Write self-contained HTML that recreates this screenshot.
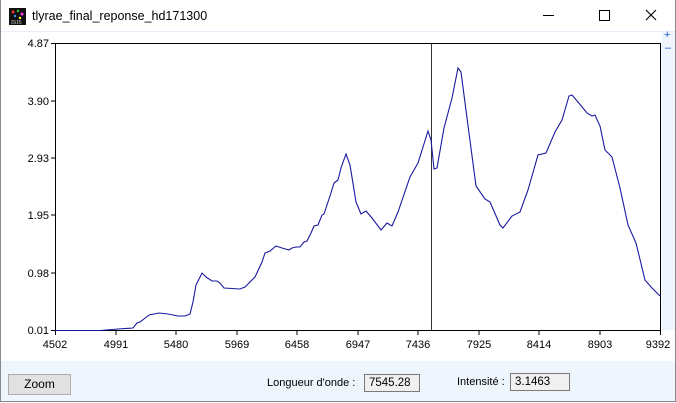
<!DOCTYPE html>
<html><head><meta charset="utf-8"><style>
body{margin:0;width:676px;height:403px;overflow:hidden;background:#fff;font-family:"Liberation Sans",sans-serif;position:relative}
.win{position:absolute;left:0;top:0;width:674px;height:401px;border:1px solid #8a8a8a;border-top:none}
.t{position:absolute;font-size:12px;color:#000}
.box{position:absolute;height:18px;border:1px solid #7a7a7a;background:#f0f0f0;font-size:11.5px;line-height:17px;padding-left:4px;box-sizing:border-box}
</style></head><body>
<div class="win"></div>
<svg style="position:absolute;left:9px;top:8px" width="17" height="17" viewBox="0 0 17 17"><rect width="17" height="17" fill="#101010"/><circle cx="4" cy="4" r="1.5" fill="#e33"/><circle cx="9" cy="3" r="1.2" fill="#3c3"/><circle cx="13" cy="6" r="1.5" fill="#f3f"/><circle cx="6" cy="8" r="1.2" fill="#39f"/><circle cx="11" cy="10" r="1.2" fill="#ff3"/><text x="2" y="16" font-size="6" fill="#ccc" font-family="Liberation Serif">ISIS</text></svg>
<div class="t" style="left:32px;top:9px;font-size:12.5px">tlyrae_final_reponse_hd171300</div>
<div style="position:absolute;left:543px;top:15px;width:11px;height:1px;background:#000"></div>
<div style="position:absolute;left:599px;top:10px;width:9px;height:9px;border:1px solid #000"></div>
<svg style="position:absolute;left:645px;top:9px" width="12" height="12"><path d="M1 1L11 11M11 1L1 11" stroke="#000" stroke-width="1.1"/></svg>
<div style="position:absolute;left:1px;top:31px;width:674px;height:1px;background:#e6f0fa"></div>
<div style="position:absolute;left:662px;top:32px;width:13px;height:298px;background:#eef5fc"></div>
<div class="t" style="left:664px;top:29px;color:#1a56c0;font-size:11px">+</div>
<div class="t" style="left:665px;top:42px;color:#1a56c0;font-size:11px">–</div>
<div style="position:absolute;left:1px;top:361px;width:674px;height:40px;background:#eef5fc"></div>
<svg style="position:absolute;left:0;top:32px" width="675" height="329" viewBox="0 32 675 329">
<rect x="55.5" y="43.5" width="605" height="287" fill="#fff" stroke="#000"/>
<g stroke="#000">
<path d="M51 43.5H55M51 101H55M51 158H55M51 215H55M51 273H55M51 330.5H55"/>
<path d="M55.5 331V335M116 331V335M176 331V335M237 331V335M297 331V335M358 331V335M418 331V335M479 331V335M539 331V335M600 331V335M660.5 331V335"/>
</g>
<g font-size="11" font-family="Liberation Sans" fill="#000" text-anchor="end">
<text x="49" y="47">4.87</text><text x="49" y="105">3.90</text><text x="49" y="162">2.93</text><text x="49" y="219">1.95</text><text x="49" y="277">0.98</text><text x="49" y="334">0.01</text>
</g>
<g font-size="11" font-family="Liberation Sans" fill="#000" text-anchor="middle">
<text x="55" y="348">4502</text><text x="116" y="348">4991</text><text x="176" y="348">5480</text><text x="237" y="348">5969</text><text x="297" y="348">6458</text><text x="358" y="348">6947</text><text x="418" y="348">7436</text><text x="479" y="348">7925</text><text x="539" y="348">8414</text><text x="600" y="348">8903</text><text x="658" y="348">9392</text>
</g>
<line x1="431.5" y1="44" x2="431.5" y2="330" stroke="#333"/>
<polyline fill="none" stroke="#1a1aa0" stroke-width="1.1" points="55,330.5 100,330.5 118,329 133,328 137,323 140,322 149,315 159,313 168,314 178,316 185,316 190,314 193,302 196,285 202,273 206,277 212,281 217,281 220,283 224,288 240,289 245,287 255,277 262,262 265,253 270,251 276,246 282,248 289,250 292,248 296,247 300,247 304,242 307,241 311,233 314,226 318,225 322,215 324,214 330,196 334,183 338,180 341,168 346,154 350,165 356,202 361,214 366,211 372,218 381,230 387,223 392,226 398,212 410,177 418,163 428,131 431,140 434,169 437,168 444,128 452,98 458,68 461,72 467,118 476,186 485,199 490,202 500,225 503,228 512,216 520,212 528,190 538,155 546,153 555,132 562,120 569,96 572,95 578,102 587,113 592,116 595,115 600,126 605,150 612,157 620,188 628,225 636,243 645,280 652,288 660,296"/>
</svg>
<div style="position:absolute;left:8px;top:374px;width:63px;height:21px;border:1px solid #adadad;background:#e1e1e1;box-sizing:border-box;font-size:12px;text-align:center;line-height:19px">Zoom</div>
<div class="t" style="left:267px;top:377px;font-size:11px">Longueur d'onde :</div>
<div class="box" style="left:364px;top:374px;width:56px">7545.28</div>
<div class="t" style="left:457px;top:376px;font-size:11px">Intensité :</div>
<div class="box" style="left:510px;top:373px;width:60px">3.1463</div>
</body></html>
